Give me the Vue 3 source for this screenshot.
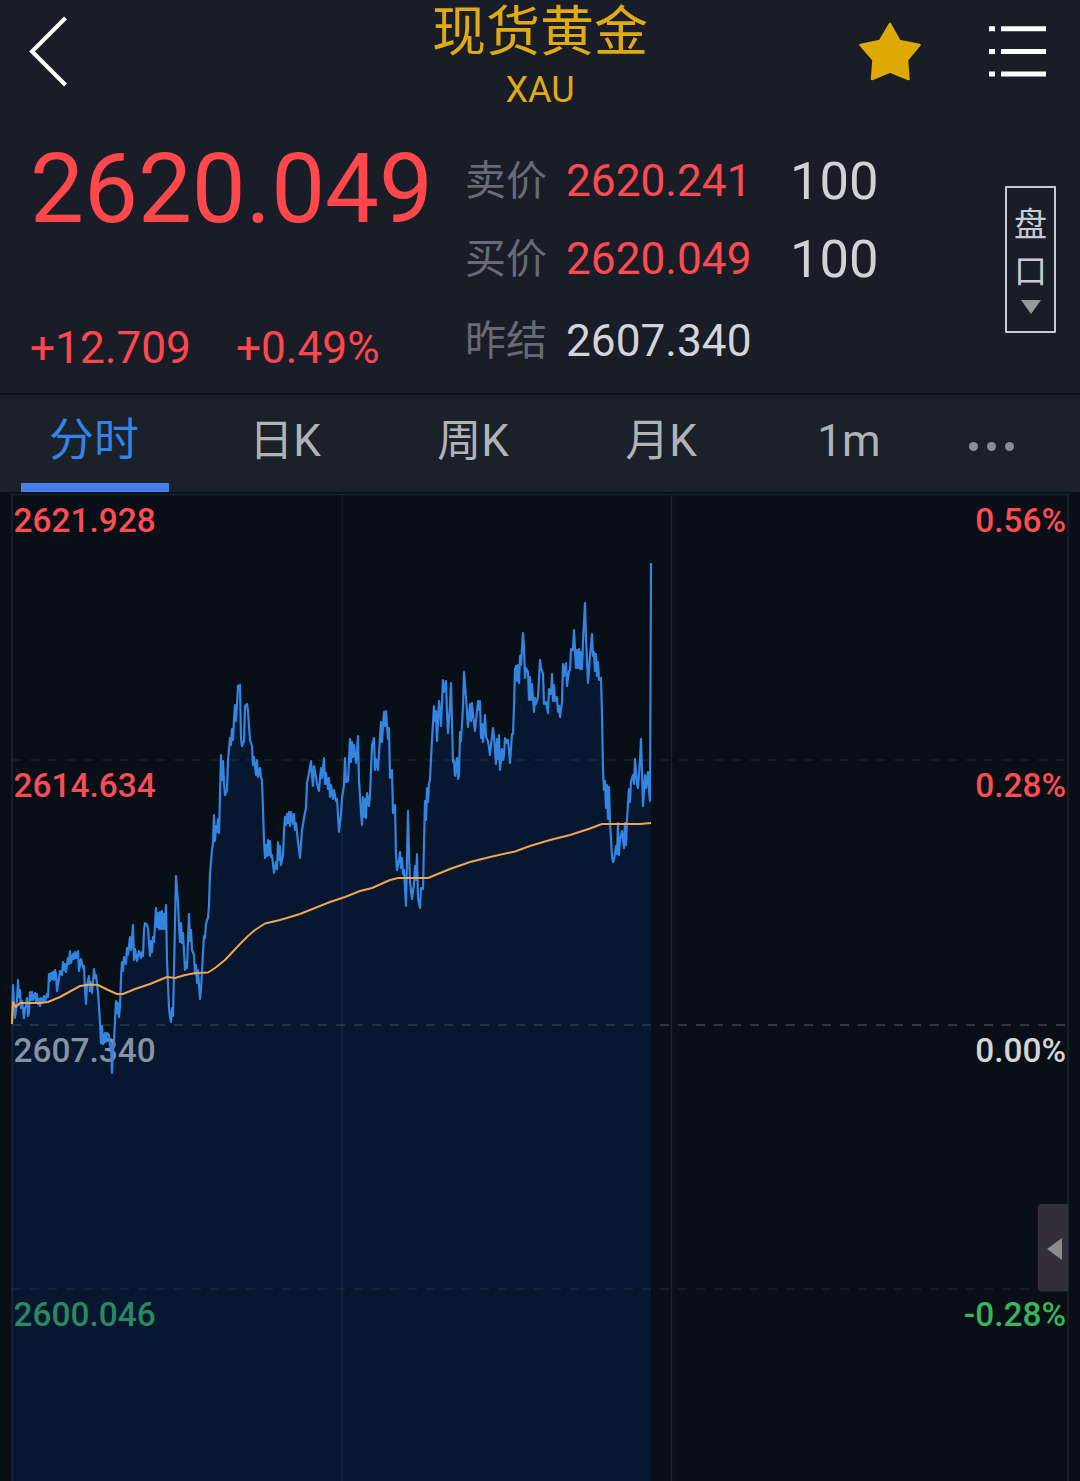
<script setup>
const tabs = ['分时', '日K', '周K', '月K', '1m']
const quotes = [
  { label: '卖价', value: '2620.241', size: '100', tone: 'up' },
  { label: '买价', value: '2620.049', size: '100', tone: 'up' },
  { label: '昨结', value: '2607.340', size: '', tone: 'flat' },
]

const levels = [
  { y: 532, price: '2621.928', pct: '0.56%', left: '#ff4d52', right: '#ff4d52' },
  { y: 797, price: '2614.634', pct: '0.28%', left: '#fb4d57', right: '#ff4d52' },
  { y: 1062, price: '2607.340', pct: '0.00%', left: '#8793a2', right: '#d3d5d7' },
  { y: 1326, price: '2600.046', pct: '-0.28%', left: '#2a8862', right: '#3cb45a' },
]

const price = `12,1022 13,985 14,1005 15,1018 17,1000 18,980 19,997 20,990 21,1008 22,1001 24,1018 25,1008 26,1005 27,998 28,1016 29,1012
30,992 31,1000 32,992 33,1000 35,993 36,1001 37,994 38,1004 39,999 40,1006 41,998 42,1003 44,996 45,1002 47,994 48,997 49,974 50,981 51,973 52,979 53,972 54,980 55,970
56,974 57,991 59,978 60,971 62,975 63,962 64,970 65,964 66,972 68,958 69,964 70,951 71,963 73,954 74,959 75,952 76,958 78,951 79,971 81,959 83,968 84,966 85,990 86,1004
87,985 89,976 90,991 91,982 92,993 94,969 95,978 96,975 98,992 100,1022 101,1043 102,1026 103,1044 105,1033 106,1042 107,1033 109,1035 110,1046 111,1045 112,1073 113,1050 114,1040
116,1001 117,1013 118,1003 119,1017 120,1006 121,978 122,962 123,971 124,957 126,964 127,948 128,955 130,937 131,950 133,925 134,960 135,949 137,961 139,951 141,958 142,952 143,956
144,930 145,923 147,925 148,928 150,956 151,941 152,952 153,937 154,942 156,908 157,927 158,913 159,929 160,912 161,929 162,911 163,929 164,914 165,929 166,905 167,960 169,1008 170,1017 171,1022 172,1008 173,1016
176,876 178,903 179,926 180,942 181,923 182,943 183,933 185,970 186,962 187,968 188,940 189,914 190,941 191,930 192,950 194,955 195,974 196,965 197,983 198,970 200,999 201,990 203,953 204,936 205,938 206,924 207,920 208,918
209,905 210,874 212,850 213,843 214,815 215,841 216,826 217,832 218,819 219,833 220,795 221,755 222,780 223,761 224,783 225,795 227,790 228,760 230,738 231,745 232,729 233,740 234,720 235,705 236,721 237,704 238,686 240,685 241,738 242,746 244,741 245,706 247,704 248,711 250,740 252,746 253,765 254,757 256,775 257,760 258,777 260,768 261,777 262,780
264,840 265,858 266,845 267,856 268,840 269,855 270,841 271,857 272,855 274,873 276,862 277,869 278,842 279,860 280,846 281,865 283,855 284,831 285,817 286,825 287,814 288,823 289,812 290,826 291,812 293,824 294,814 295,830 296,823 298,842 300,858 302,830 304,818 306,808 307,783 309,773 311,761 312,776 313,786 314,766 316,777 317,784 319,791 320,778 321,768 322,778 324,758 325,784 326,773 328,789 329,778 330,797 331,785 333,799 334,790 336,801 337,799 339,832
341,814 342,798 344,785 345,758 346,782 348,781 350,739 351,762 352,742 353,757 354,745 356,763 357,751 358,736 359,780 361,812 362,825 363,797 364,817 365,799 366,818 367,793 369,806 370,795 372,745 374,738 375,770 376,759 378,770 380,737 381,722 382,742 384,712 385,726 386,711 388,739 389,728 390,778 392,770 393,813 395,805 396,855 397,870 399,860 400,852 401,868 402,858 403,874 404,870 406,906
408,811 409,854 410,882 412,899 414,884 415,866 416,880 417,854 418,898 420,908 421,888 423,889 424,842 425,801 426,820 427,788 428,802 429,784 430,779 432,740 434,706 435,721 436,711 437,741 439,701 440,710 441,726 443,680 444,692 446,681 447,713 448,733 450,706 451,683 453,762 454,760 455,776 457,758 458,779 459,776 460,732 461,741 463,707 464,672
466,698 468,727 470,704 471,721 472,703 473,714 475,731 478,701 479,710 480,701 481,738 482,724 483,742 485,715 486,737 488,741 490,755 491,745 493,728 494,737 496,764 497,739 498,759 499,735 500,770 502,749 503,760 504,755 505,738 507,743 508,740 510,763 512,734 513,734 514,706 515,669 516,666 517,681 518,665 519,683 520,656 521,665 523,633 524,646 525,678 526,668 528,672 529,700 530,677 531,700 532,684 533,698 534,712 535,698 536,704 538,697 540,660 541,668 543,674 544,704 546,702 548,713
549,689 551,694 552,674 553,701 554,685 555,701 557,697 558,712 559,706 560,717 562,702 563,664 564,676 566,663 567,686 569,671 570,670 571,649 573,650 574,630 576,668 577,650 578,668 579,649 580,669 581,652 582,669 583,641 585,603 586,638 588,683 590,656 592,634 593,656 594,652 595,671 596,654 597,676 598,662 599,680 601,678 602,714 603,770 604,790 605,781 606,808 607,785 608,819 609,787 610,822 612,857 613,862 614,860 616,846 617,854 618,823 619,855 620,840 622,831 624,848 625,823 626,845 627,820 629,789 630,802 631,781 633,775 634,784 635,759 637,784 638,788 640,760 641,739 643,806 645,775 646,788 648,772 649,791 650,801 651,563`.replace(/\s+/g, ' ')

const average = '12,1024 13,1002 16,1007 20,1003 40,1003 48,1002 60,997 80,986 90,984.5 98,985 108,990 117,994 123,994 135,989 150,984 167,977 175,978 185,975 196,973 208,972.5 215,968 225,960 240,944 248,936 255,930 265,923.5 280,920 300,914 330,902 345,897 360,891 372,888 390,880 398,878 428,878 450,869 470,862 490,857 515,851.5 530,846 550,840 570,835 590,828.5 602,824 640,824 651,823'
</script>

<template>
  <main class="screen">
    <header class="header">
      <svg class="back" width="80" height="104" viewBox="0 0 80 104">
        <path d="M65.5 18 32 51.5 65.5 85" fill="none" stroke="#fff" stroke-width="4" />
      </svg>
      <div class="title">
        <h1>现货黄金</h1>
        <p>XAU</p>
      </div>
      <svg class="actions" width="240" height="104" viewBox="840 0 240 104">
        <path
          d="M890 24 899.5 41 919.5 45 907 60 908.5 79 890 71.5 872 79 873.5 60 860.5 45 880 41Z"
          fill="#dfaa00" stroke="#dfaa00" stroke-width="2.5" stroke-linejoin="round"
        />
        <path
          d="M989 28.8h6M1001 28.8h45M989 51.5h6M1001 51.5h45M989 74.1h6M1001 74.1h45"
          stroke="#fff" stroke-width="5"
        />
      </svg>
    </header>

    <section class="quote">
      <div class="last">
        <strong>2620.049</strong>
        <div class="change"><span>+12.709</span><span>+0.49%</span></div>
      </div>
      <dl class="book">
        <div v-for="q in quotes" :key="q.label" class="row">
          <dt>{{ q.label }}</dt>
          <dd :class="q.tone">{{ q.value }}</dd>
          <dd class="size">{{ q.size }}</dd>
        </div>
      </dl>
      <button class="depth">
        <span>盘</span>
        <span>口</span>
        <svg width="20" height="14" viewBox="0 0 20 14"><path d="M0 0h20L10 14z" fill="#97999d" /></svg>
      </button>
    </section>

    <nav class="tabs">
      <a v-for="(tab, i) in tabs" :key="tab" class="tab" :class="{ active: i === 0 }">{{ tab }}</a>
      <span class="more"><i></i><i></i><i></i></span>
    </nav>

    <svg class="chart" width="1080" height="989" viewBox="0 492 1080 989">
      <polygon :points="`12,1481 ${price} 651,1481`" fill="#06172f" />
      <g fill="none" stroke="#78909c" stroke-width="1.5">
        <path d="M12 1481V494.5H1068V1481M671.5 494V1481" stroke-opacity=".17" />
        <path d="M342 494V1481" stroke-opacity=".11" />
      </g>
      <g stroke="#8c969e" stroke-width="1.5" stroke-dasharray="9 9">
        <path d="M12 760H1068M12 1289H1068" stroke-opacity=".14" />
        <path d="M12 1025H651" stroke-opacity=".28" />
        <path d="M660 1025H1068" stroke-opacity=".42" />
      </g>
      <g class="labels">
        <template v-for="l in levels" :key="l.price">
          <text x="13.5" :y="l.y" :fill="l.left">{{ l.price }}</text>
          <text x="1066" :y="l.y" :fill="l.right" text-anchor="end">{{ l.pct }}</text>
        </template>
      </g>
      <polyline :points="price" fill="none" stroke="#3385df" stroke-width="2.2" stroke-linejoin="round" />
      <polyline :points="average" fill="none" stroke="#efa64e" stroke-width="2" stroke-linejoin="round" />
      <rect x="1038" y="1204" width="30.5" height="87.5" rx="3" fill="#332f38" />
      <path d="M1047 1249 1062 1238V1260Z" fill="#8b8b90" />
    </svg>
  </main>
</template>

<style>
body {
  margin: 0;
  background: #080f16;
}
</style>

<style scoped>
.screen {
  width: 1080px;
  height: 1481px;
  overflow: hidden;
  background: #191d28;
  font-family: Roboto, "Noto Sans CJK SC", sans-serif;
}
.header {
  display: flex;
  justify-content: space-between;
  height: 120px;
}
.back {
  margin-right: 160px;
}
.title {
  color: #dfaa14;
  text-align: center;
}
.title h1 {
  height: 66px;
  margin: 0;
  font-size: 54px;
  font-weight: 400;
  line-height: 66px;
}
.title p {
  margin: 0;
  font-size: 36px;
  line-height: 48px;
}
.quote {
  display: flex;
  height: 273px;
  border-bottom: 2px solid #0d111a;
}
.last {
  width: 435px;
  padding-left: 30px;
  box-sizing: border-box;
  color: #ff474c;
}
.last strong {
  display: block;
  font-size: 96px;
  font-weight: 400;
  line-height: 138px;
}
.change {
  display: flex;
  gap: 45px;
  margin-top: 60px;
  font-size: 44.2px;
  line-height: 60px;
}
.book {
  width: 570px;
  margin: 22px 0 0;
  padding-left: 30px;
  box-sizing: border-box;
}
.row {
  display: flex;
  align-items: center;
  height: 78px;
}
.row:last-child {
  margin-top: 4px;
}
.row dt {
  width: 101px;
  margin-top: -9px;
  color: #686b75;
  font: 400 41px/60px "Noto Sans CJK SC", sans-serif;
}
.row dd {
  width: 224px;
  margin: 0;
  font-size: 44.2px;
}
.row .up {
  color: #ff4a50;
}
.row .flat {
  color: #d3d5da;
}
.row .size {
  width: auto;
  color: #d0d2d6;
  font-size: 52.5px;
}
.depth {
  display: flex;
  flex-direction: column;
  align-items: center;
  width: 51px;
  height: 147px;
  margin: 66px 0 0;
  padding: 11px 0 0;
  box-sizing: border-box;
  border: 2px solid #c9cbd1;
  border-radius: 1px;
  background: none;
  color: #c9cbd1;
  font: 400 33px/47px "Noto Sans CJK SC", sans-serif;
}
.depth svg {
  margin-top: 7px;
}
.tabs {
  display: flex;
  height: 97px;
  padding-left: 1px;
  background: #1a2128;
}
.tab {
  position: relative;
  width: 188px;
  color: #b1b2b6;
  font-size: 44px;
  line-height: 92px;
  text-align: center;
  text-indent: 4px;
}
.tab.active {
  color: #3484e6;
  font-size: 45px;
  text-indent: -2px;
}
.tab.active::after {
  position: absolute;
  bottom: 0;
  left: 20px;
  width: 148px;
  height: 9px;
  background: #477ee8;
  content: "";
}
.more {
  display: flex;
  gap: 9px;
  padding: 47px 0 0 28px;
}
.more i {
  width: 9px;
  height: 9px;
  border-radius: 50%;
  background: #8c8d94;
}
.chart {
  display: block;
  background: #080f16;
}
.labels {
  font-family: Roboto, sans-serif;
  font-size: 33.4px;
  font-weight: 500;
}
</style>
